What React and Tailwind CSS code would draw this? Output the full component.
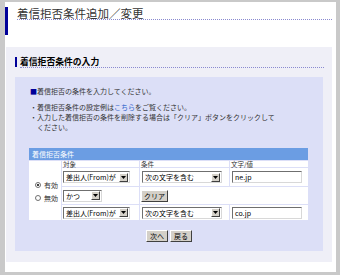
import React from "react";

function Arrow() {
  return (
    <div className="w-[9px] h-[9px] bg-[#d4d0c8] border-t border-l border-t-white border-l-white border-r border-b border-r-[#404040] border-b-[#404040] flex items-center justify-center shrink-0">
      <svg width="5" height="3" viewBox="0 0 5 3"><path d="M0 0H5L2.5 3Z" fill="#000" /></svg>
    </div>
  );
}

function Select({ cls, text }) {
  return (
    <div className={`${cls} h-[12px] bg-white border border-t-[#6f6f6f] border-l-[#6f6f6f] border-r-[#d8d8d8] border-b-[#d8d8d8] flex items-center pl-[2px] pr-[1px]`}>
      <span className="flex-1 text-[7px] leading-[10px] whitespace-nowrap overflow-hidden text-black">{text}</span>
      <Arrow />
    </div>
  );
}

function Input({ text }) {
  return (
    <div className="w-[70px] h-[12px] bg-white border border-t-[#6f6f6f] border-l-[#6f6f6f] border-r-[#d8d8d8] border-b-[#d8d8d8] flex items-center pl-[2px]">
      <span className="text-[7px] leading-[10px] text-black">{text}</span>
    </div>
  );
}

function Btn({ text, cls }) {
  return (
    <div className={`${cls} h-[12px] bg-[#d4d0c8] border border-t-white border-l-white border-r-[#404040] border-b-[#404040] flex items-center justify-center text-[7px] leading-[10px] text-black`}>
      {text}
    </div>
  );
}

function Radio({ checked }) {
  return (
    <div className="w-[6px] h-[6px] rounded-full bg-white border border-[#707070] flex items-center justify-center">
      {checked && <div className="w-[2px] h-[2px] rounded-full bg-black" />}
    </div>
  );
}

export default function App() {
  return (
    <div className="w-[340px] h-[275px] bg-[#c9c9c9] pt-[2px] pl-[5px] pr-[4px] pb-[3px] font-['Noto_Sans_CJK_JP',sans-serif]">
      <div className="bg-white h-full pt-[5px]">
        <div className="flex h-[28px]">
          <div className="w-[3px] bg-[#000099]" />
          <div className="ml-[9px] mr-[4px] flex-1">
            <div className="h-[13px] pt-[0px] text-[11.5px] leading-[12px] text-[#333] border-b border-dotted border-[#8a8ad0]">
              着信拒否条件追加／変更
            </div>
          </div>
        </div>
        <div className="mt-[12px] ml-[1px] mr-[4px] bg-[#efeff7] pt-[10px] pb-[11px]">
          <div className="flex ml-[9px] mr-[8px] h-[11px]">
            <div className="w-[2px] h-[10px] bg-[#000099]" />
            <div className="ml-[3px] flex-1 border-b border-dotted border-[#8a8ad0] text-[8.8px] leading-[10px] font-bold text-black">
              着信拒否条件の入力
            </div>
          </div>
          <div className="mt-[9px] mx-[9px] bg-[#dcdff7] pt-[9px] pb-[9px]">
            <div className="pl-[15px] text-[7px] leading-[10px] text-[#333]">
              <div><span className="text-[#000099]">■</span>着信拒否の条件を入力してください。</div>
              <div className="mt-[6px] pl-[7px]">
                <div className="-indent-[7px]">・着信拒否条件の設定例は<span className="text-[#3366cc]">こちら</span>をご覧ください。</div>
                <div className="-indent-[7px]">・入力した着信拒否の条件を削除する場合は「クリア」ボタンをクリックして</div>
                <div>ください。</div>
              </div>
            </div>
            <div className="mt-[16px] ml-[14px] w-[279px]">
              <div className="h-[12px] bg-[#6b9de3] text-white text-[7px] leading-[12px] pl-[3px] mb-[1px]">着信拒否条件</div>
              <div className="grid grid-cols-[32px_77px_89px_78px] grid-rows-[6px_18px_17px_15px] gap-[1px]">
                <div className="row-span-4 bg-white flex flex-col justify-center pl-[6px] gap-[5px] pt-[2px]">
                  <div className="flex items-center gap-[3px] text-[7px] leading-[8px] text-[#333]"><Radio checked />有効</div>
                  <div className="flex items-center gap-[3px] text-[7px] leading-[8px] text-[#333]"><Radio />無効</div>
                </div>
                <div className="bg-white text-[6.5px] leading-[6px] text-[#333] pl-[1px]">対象</div>
                <div className="bg-white text-[6.5px] leading-[6px] text-[#333] pl-[1px]">条件</div>
                <div className="bg-white text-[6.5px] leading-[6px] text-[#333] pl-[1px]">文字/値</div>

                <div className="bg-white flex items-center pl-[1px]"><Select cls="w-[67px]" text="差出人(From)が" /></div>
                <div className="bg-white flex items-center pl-[2px]"><Select cls="w-[80px]" text="次の文字を含む" /></div>
                <div className="bg-white flex items-center pl-[2px]"><Input text="ne.jp" /></div>

                <div className="bg-white flex items-center pl-[1px]"><Select cls="w-[39px]" text="かつ" /></div>
                <div className="col-span-2 bg-white flex items-center pl-[1px]"><Btn cls="w-[27px]" text="クリア" /></div>

                <div className="bg-white flex items-center pl-[1px]"><Select cls="w-[67px]" text="差出人(From)が" /></div>
                <div className="bg-white flex items-center pl-[2px]"><Select cls="w-[80px]" text="次の文字を含む" /></div>
                <div className="bg-white flex items-center pl-[2px]"><Input text="co.jp" /></div>
              </div>
            </div>
            <div className="mt-[10px] flex justify-center gap-[2px]">
              <Btn cls="w-[22px]" text="次へ" />
              <Btn cls="w-[22px]" text="戻る" />
            </div>
          </div>
        </div>
      </div>
    </div>
  );
}
